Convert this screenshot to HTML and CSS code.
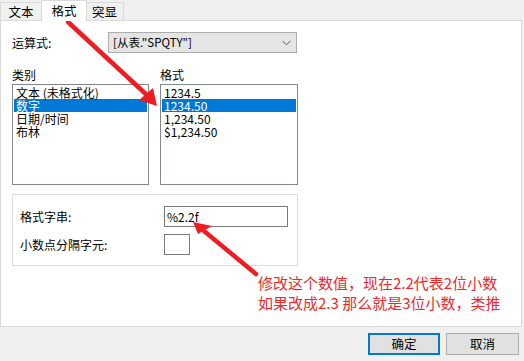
FILE: index.html
```html
<!DOCTYPE html>
<html>
<head>
<meta charset="utf-8">
<link rel="stylesheet" href="styles.css">
</head>
<body>
<div class="window">
  <div class="tabs">
    <div class="tab t1">文本</div>
    <div class="tab t2 active">格式</div>
    <div class="tab t3">突显</div>
  </div>
  <div class="panel">
    <div class="expr">
      <span class="lbl">运算式:</span>
      <div class="combo">
        <span class="combo-text">[从表."SPQTY"]</span>
        <svg class="chev" width="9" height="6" viewBox="0 0 9 6"><path d="M0.5 0.8 L4.5 4.8 L8.5 0.8" fill="none" stroke="#555" stroke-width="1"/></svg>
      </div>
    </div>
    <div class="lists">
      <div class="col">
        <div class="cap">类别</div>
        <ul class="list left">
          <li>文本 (未格式化)</li>
          <li class="sel">数字</li>
          <li>日期/时间</li>
          <li>布林</li>
        </ul>
      </div>
      <div class="col">
        <div class="cap">格式</div>
        <ul class="list right">
          <li>1234.5</li>
          <li class="sel">1234.50</li>
          <li>1,234.50</li>
          <li>$1,234.50</li>
        </ul>
      </div>
    </div>
    <div class="group">
      <div class="grow">
        <span class="glbl">格式字串:</span>
        <div class="input wide">%2.2f</div>
      </div>
      <div class="grow">
        <span class="glbl">小数点分隔字元:</span>
        <div class="input small"></div>
      </div>
    </div>
    <div class="note">修改这个数值，现在2.2代表2位小数<br>如果改成2.3 那么就是3位小数，类推</div>
  </div>
  <div class="buttons">
    <div class="btn primary">确定</div>
    <div class="btn cancel">取消</div>
  </div>
  <svg class="arrows" width="524" height="361" viewBox="0 0 524 361">
    <line x1="68" y1="22" x2="149" y2="97" stroke="#ee1d23" stroke-width="4.5" stroke-linecap="round"/>
    <polygon points="157,106 139,100 153,88" fill="#ee1d23"/>
    <line x1="256" y1="274" x2="204" y2="231" stroke="#ee1d23" stroke-width="4.5" stroke-linecap="round"/>
    <polygon points="193,222 198,234 212,226" fill="#ee1d23"/>
  </svg>
</div>
</body>
</html>
```

FILE: styles.css
```css
body {
  margin: 0;
  background: #f0f0f0;
  font-family: "Noto Sans CJK SC", "Noto Sans", sans-serif;
  font-size: 12px;
  color: #000;
}

.window {
  width: 524px;
  height: 361px;
  position: relative;
  overflow: hidden;
}

.tabs {
  display: flex;
  align-items: flex-end;
  height: 20px;
}

.tab {
  box-sizing: border-box;
  height: 18px;
  border: 1px solid #d9d9d9;
  border-bottom: none;
  background: #f0f0f0;
  line-height: 17px;
  font-size: 12.5px;
  text-align: center;
}

.t1 { width: 42px; }
.t2 { width: 46px; margin-left: -1px; }
.t3 { width: 38px; margin-left: -1px; border-left: none; }

.tab.active {
  height: 21px;
  background: #fff;
  margin-bottom: -1px;
  position: relative;
  z-index: 1;
  line-height: 19px;
}

.panel {
  box-sizing: border-box;
  width: 522px;
  height: 307px;
  background: #fff;
  border: 1px solid #d9d9d9;
  padding: 11px 0 0 11px;
  position: relative;
}

.expr {
  display: flex;
  align-items: center;
  height: 21px;
}

.lbl {
  width: 96px;
}

.combo {
  box-sizing: border-box;
  width: 189px;
  height: 21px;
  border: 1px solid #adadad;
  background: #e5e5e5;
  display: flex;
  align-items: center;
  justify-content: space-between;
  padding: 0 5px 0 4px;
}

.combo-text {
  font-size: 11.5px;
  line-height: 19px;
}

.lists {
  display: flex;
  gap: 11px;
  margin-top: 13px;
}

.cap {
  line-height: 18px;
  height: 18px;
}

.list {
  box-sizing: border-box;
  height: 101px;
  border: 1px solid #828790;
  margin: 0;
  padding: 1px;
  list-style: none;
}

.list.left { width: 137px; }
.list.right { width: 138px; }

.list li {
  height: 13px;
  line-height: 13px;
  padding-left: 2px;
  white-space: nowrap;
}

.list li.sel {
  background: #0078d7;
  color: #fff;
}

.group {
  box-sizing: border-box;
  width: 286px;
  height: 72px;
  margin-top: 9px;
  border: 1px solid #dcdcdc;
  padding: 11px 0 0 7px;
}

.grow {
  display: flex;
  align-items: center;
}

.grow + .grow {
  margin-top: 7px;
}

.glbl {
  width: 144px;
}

.input {
  box-sizing: border-box;
  height: 21px;
  border: 1px solid #7a7a7a;
  background: #fff;
  padding-left: 2px;
  line-height: 19px;
}

.input.wide { width: 124px; }
.input.small { width: 26px; }

.note {
  position: absolute;
  left: 257px;
  top: 252px;
  color: #f0282c;
  font-size: 15px;
  line-height: 20px;
  white-space: nowrap;
}

.buttons {
  display: flex;
  justify-content: flex-end;
  gap: 6px;
  padding-right: 5px;
  margin-top: 6px;
}

.btn {
  box-sizing: border-box;
  height: 22px;
  background: #e1e1e1;
  border: 1px solid #adadad;
  text-align: center;
  line-height: 20px;
  font-size: 12.5px;
}

.btn.primary {
  width: 72px;
  border: 2px solid #0078d7;
  line-height: 18px;
}

.btn.cancel {
  width: 73px;
}

.arrows {
  position: absolute;
  left: 0;
  top: 0;
  pointer-events: none;
}
```
